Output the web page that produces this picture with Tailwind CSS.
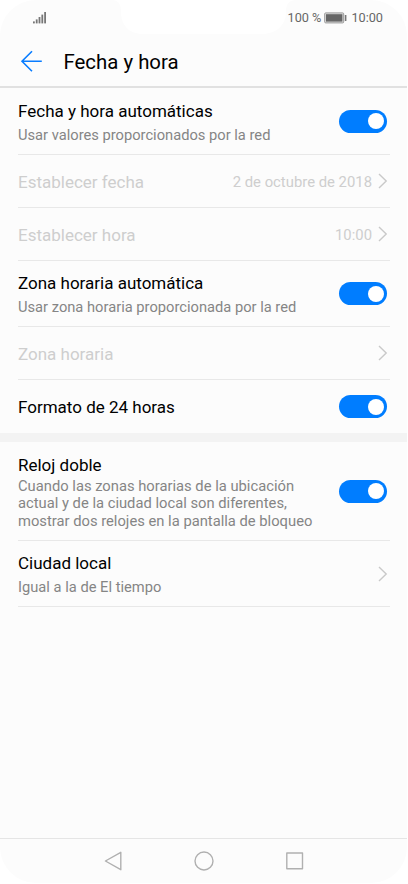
<!DOCTYPE html>
<html lang="es">

<head>
    <meta charset="UTF-8" />
    <title>Fecha y hora</title>
    <script src="https://cdn.jsdelivr.net/npm/@tailwindcss/browser@4"></script>
</head>

<body class="bg-white font-['Roboto',sans-serif]">
    <!-- Phone screen -->
    <div class="relative flex h-[883px] w-[407px] flex-col overflow-hidden rounded-[36px] bg-[#fcfcfc]">
        <!-- Notch -->
        <svg class="absolute top-0 left-[112px]" width="184" height="35" viewBox="0 0 184 35">
            <path d="M0 0C6 0 9 4 9 12C9 25 17 34 31 34H150C164 34 174 25 174 12C174 4 177 0 184 0Z" fill="#fff" />
        </svg>

        <!-- Status Bar -->
        <div class="relative flex h-[35px] shrink-0 items-center justify-between pr-6 pl-[33px] text-[#666]">
            <svg class="mt-px" width="14" height="12" viewBox="0 0 14 12" fill="#777">
                <rect x="0" y="9.4" width="1.8" height="2" />
                <rect x="2.8" y="7.4" width="1.8" height="4" />
                <rect x="5.6" y="5" width="1.8" height="6.4" />
                <rect x="8.4" y="2.6" width="1.8" height="8.8" />
                <rect x="11.2" y="0" width="1.8" height="11.4" />
            </svg>
            <div class="flex items-center text-[12.7px] leading-4">
                <span>100 %</span>
                <svg class="mr-1 ml-[3px]" width="23" height="12" viewBox="0 0 23 12">
                    <rect x="0.7" y="0.9" width="19" height="10" rx="1" fill="#ddd" stroke="#999" />
                    <rect x="2" y="2.2" width="16.4" height="7.4" fill="#666" />
                    <rect x="20.8" y="3" width="1.6" height="6" fill="#777" />
                </svg>
                <span>10:00</span>
            </div>
        </div>

        <!-- Header -->
        <div class="flex h-[53px] shrink-0 items-center border-b-2 border-[#e1e1e1] pl-5">
            <svg width="24" height="24" viewBox="0 0 24 24" fill="none" stroke="#0a7dff" stroke-width="1.6">
                <path d="M12 2.2L2 12.2L12 22.2M2 12.2H21.8" />
            </svg>
            <h1 class="ml-[19.5px] pt-[2px] text-[20.4px] leading-6 text-black">Fecha y hora</h1>
        </div>

        <!-- Settings -->
        <div class="pr-[17px] pl-[18px]">
            <div class="flex h-[67px] items-center justify-between border-b border-[#e8e8e8]">
                <div class="pt-1">
                    <div class="text-[17px] leading-6 text-black">Fecha y hora automáticas</div>
                    <div class="text-[14.7px] leading-6 text-[#858585]">Usar valores proporcionados por la red</div>
                </div>
                <div class="mr-[3px] flex h-[23px] w-12 items-center justify-end rounded-full bg-[#007dff] pr-[3px]">
                    <div class="size-4 rounded-full bg-white"></div>
                </div>
            </div>
            <div class="flex h-[53px] items-center border-b border-[#e8e8e8] text-[#cecece]">
                <div class="flex-1 pt-[2px] text-[17px] leading-6">Establecer fecha</div>
                <div class="pt-[2px] text-[14.85px] leading-6">2 de octubre de 2018</div>
                <svg class="mr-[2px] ml-[6px]" width="10" height="16" viewBox="0 0 10 16" fill="none" stroke="#c9c9c9" stroke-width="1.4">
                    <path d="M1 1L8.2 8L1 15" />
                </svg>
            </div>
            <div class="flex h-[53px] items-center border-b border-[#e8e8e8] text-[#cecece]">
                <div class="flex-1 pt-[2px] text-[17px] leading-6">Establecer hora</div>
                <div class="pt-[2px] text-[14.85px] leading-6">10:00</div>
                <svg class="mr-[2px] ml-[6px]" width="10" height="16" viewBox="0 0 10 16" fill="none" stroke="#c9c9c9" stroke-width="1.4">
                    <path d="M1 1L8.2 8L1 15" />
                </svg>
            </div>
            <div class="flex h-[66px] items-center justify-between border-b border-[#e8e8e8]">
                <div class="pt-[3px]">
                    <div class="text-[17px] leading-6 text-black">Zona horaria automática</div>
                    <div class="text-[14.7px] leading-6 text-[#858585]">Usar zona horaria proporcionada por la red</div>
                </div>
                <div class="mr-[3px] flex h-[23px] w-12 items-center justify-end rounded-full bg-[#007dff] pr-[3px]">
                    <div class="size-4 rounded-full bg-white"></div>
                </div>
            </div>
            <div class="flex h-[53px] items-center border-b border-[#e8e8e8] text-[#cecece]">
                <div class="flex-1 pt-[2px] text-[17px] leading-6">Zona horaria</div>
                <svg class="mr-[2px]" width="10" height="16" viewBox="0 0 10 16" fill="none" stroke="#c9c9c9" stroke-width="1.4">
                    <path d="M1 1L8.2 8L1 15" />
                </svg>
            </div>
            <div class="flex h-[53px] items-center justify-between">
                <div class="pt-px text-[17px] leading-6 text-black">Formato de 24 horas</div>
                <div class="mr-[3px] flex h-[23px] w-12 items-center justify-end rounded-full bg-[#007dff] pr-[3px]">
                    <div class="size-4 rounded-full bg-white"></div>
                </div>
            </div>
        </div>

        <div class="h-[9px] shrink-0 bg-[#f3f3f3]"></div>

        <div class="pr-[17px] pl-[18px]">
            <div class="flex h-[99px] items-center justify-between border-b border-[#e8e8e8]">
                <div class="pt-px">
                    <div class="text-[17px] leading-6 text-black">Reloj doble</div>
                    <div class="mt-px text-[14.75px] leading-[17.5px] whitespace-nowrap text-[#858585]">
                        Cuando las zonas horarias de la ubicación<br />
                        actual y de la ciudad local son diferentes,<br />
                        mostrar dos relojes en la pantalla de bloqueo
                    </div>
                </div>
                <div class="mr-[3px] flex h-[23px] w-12 items-center justify-end rounded-full bg-[#007dff] pr-[3px]">
                    <div class="size-4 rounded-full bg-white"></div>
                </div>
            </div>
            <div class="flex h-[66px] items-center justify-between border-b border-[#e8e8e8]">
                <div class="pt-[3px]">
                    <div class="text-[17px] leading-6 text-black">Ciudad local</div>
                    <div class="text-[14.7px] leading-6 text-[#858585]">Igual a la de El tiempo</div>
                </div>
                <svg class="mr-[2px]" width="10" height="16" viewBox="0 0 10 16" fill="none" stroke="#c9c9c9" stroke-width="1.4">
                    <path d="M1 1L8.2 8L1 15" />
                </svg>
            </div>
        </div>

        <!-- Navigation Bar -->
        <div class="mt-auto flex h-[45px] shrink-0 items-center justify-center gap-[71px] border-t border-[#e5e5e5]">
            <svg width="20" height="20" viewBox="0 0 20 20" fill="none" stroke="#b0b0b0" stroke-width="1.4" stroke-linejoin="round">
                <path d="M17.8 1.3V18.7L2.4 10Z" />
            </svg>
            <svg width="20" height="20" viewBox="0 0 20 20" fill="none" stroke="#b0b0b0" stroke-width="1.4">
                <circle cx="10" cy="10" r="9" />
            </svg>
            <svg width="20" height="20" viewBox="0 0 20 20" fill="none" stroke="#b0b0b0" stroke-width="1.4" stroke-linejoin="round">
                <rect x="1.8" y="2" width="15.7" height="15.7" />
            </svg>
        </div>
    </div>
</body>

</html>
